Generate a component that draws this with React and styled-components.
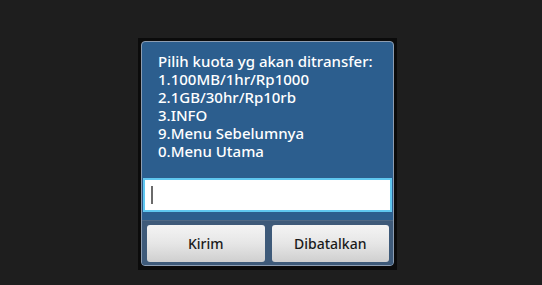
import React from "react";
import styled, { createGlobalStyle } from "styled-components";

const GlobalStyle = createGlobalStyle`
    html, body {
        margin: 0;
        padding: 0;
        background: #1e1e1e;
        width: 542px;
        height: 285px;
        overflow: hidden;
    }
`;

const menuLines = [
    "Pilih kuota yg akan ditransfer:",
    "1.100MB/1hr/Rp1000",
    "2.1GB/30hr/Rp10rb",
    "3.INFO",
    "9.Menu Sebelumnya",
    "0.Menu Utama",
];

const App = () => {
    return (
        <>
            <GlobalStyle />
            <Page>
                <Screen>
                    <Dialog>
                        <Message>
                            {menuLines.map((line) => (
                                <Line key={line}>{line}</Line>
                            ))}
                        </Message>
                        <InputWrap>
                            <Input>
                                <Caret />
                            </Input>
                        </InputWrap>
                        <ButtonBar>
                            <Button>Kirim</Button>
                            <Button>Dibatalkan</Button>
                        </ButtonBar>
                    </Dialog>
                </Screen>
            </Page>
        </>
    );
};

const Page = styled.div`
    width: 542px;
    height: 285px;
    padding: 38px 0 0 138px;
    box-sizing: border-box;
`;

const Screen = styled.div`
    width: 259px;
    height: 232px;
    background: #0b0b0b;
    padding: 3px;
    box-sizing: border-box;
`;

const Dialog = styled.div`
    width: 253px;
    height: 225px;
    box-sizing: border-box;
    border: 1px solid #8d9db1;
    border-radius: 4px;
    background: #2c5e8e;
    display: flex;
    flex-direction: column;
    overflow: hidden;
`;

const Message = styled.div`
    padding: 10px 0 0 16px;
    height: 136px;
    box-sizing: border-box;
    font-family: "Noto Sans", "Open Sans", sans-serif;
    font-size: 15px;
    font-weight: 500;
    line-height: 18px;
    color: #ffffff;
`;

const Line = styled.div`
    white-space: nowrap;
    height: 18px;
`;

const InputWrap = styled.div`
    padding: 0 1px;
    height: 42px;
`;

const Input = styled.div`
    height: 34px;
    box-sizing: border-box;
    background: #ffffff;
    border: 2px solid #5fc7f0;
    display: flex;
    align-items: center;
    padding-left: 6px;
`;

const Caret = styled.div`
    width: 2px;
    height: 18px;
    background: #6a6a6a;
`;

const ButtonBar = styled.div`
    flex: 1;
    background: #3e5a79;
    border-top: 1px solid #4f6884;
    display: flex;
    gap: 7px;
    padding: 4px 4px 3px 5px;
`;

const Button = styled.div`
    flex: 1;
    border-radius: 3px;
    background: linear-gradient(#f4f4f4, #e6e6e6 50%, #cfcfcf);
    display: flex;
    align-items: center;
    justify-content: center;
    font-family: "Noto Sans", "Open Sans", sans-serif;
    font-size: 14px;
    font-weight: 500;
    color: #1a1a1a;
`;

export default App;
